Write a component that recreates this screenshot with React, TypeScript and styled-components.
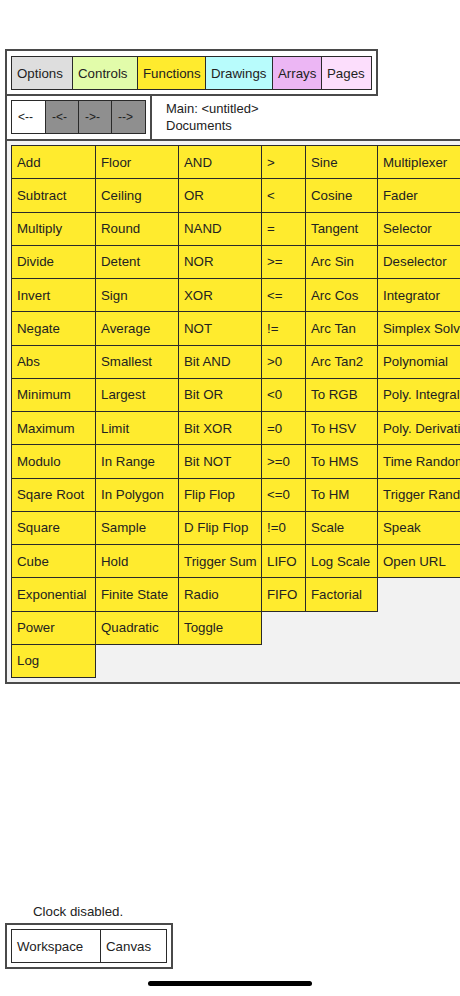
import React from "react";
import styled, { createGlobalStyle } from "styled-components";

const GlobalStyle = createGlobalStyle`
  html, body {
    margin: 0;
    padding: 0;
    background: #ffffff;
    overflow: hidden;
  }
  body {
    font-family: "Liberation Sans", Arial, Helvetica, sans-serif;
    font-size: 13.3px;
    color: #222;
  }
`;

interface Tab {
  label: string;
  color: string;
  width: number;
}

const tabs: Tab[] = [
  { label: "Options", color: "#dedede", width: 60 },
  { label: "Controls", color: "#e2fcaa", width: 65 },
  { label: "Functions", color: "#ffeb2e", width: 68 },
  { label: "Drawings", color: "#b8fcfc", width: 67 },
  { label: "Arrays", color: "#ecb6f4", width: 49 },
  { label: "Pages", color: "#fcdefc", width: 50 },
];

const navButtons = [
  { label: "<--", active: true, width: 33 },
  { label: "-<-", active: false, width: 33 },
  { label: "->-", active: false, width: 33 },
  { label: "-->", active: false, width: 34 },
];

const columns: { width: number; items: string[] }[] = [
  {
    width: 85,
    items: [
      "Add", "Subtract", "Multiply", "Divide", "Invert", "Negate", "Abs",
      "Minimum", "Maximum", "Modulo", "Sqare Root", "Square", "Cube",
      "Exponential", "Power", "Log",
    ],
  },
  {
    width: 83,
    items: [
      "Floor", "Ceiling", "Round", "Detent", "Sign", "Average", "Smallest",
      "Largest", "Limit", "In Range", "In Polygon", "Sample", "Hold",
      "Finite State", "Quadratic",
    ],
  },
  {
    width: 83,
    items: [
      "AND", "OR", "NAND", "NOR", "XOR", "NOT", "Bit AND", "Bit OR",
      "Bit XOR", "Bit NOT", "Flip Flop", "D Flip Flop", "Trigger Sum",
      "Radio", "Toggle",
    ],
  },
  {
    width: 44,
    items: [
      ">", "<", "=", ">=", "<=", "!=", ">0", "<0", "=0", ">=0", "<=0",
      "!=0", "LIFO", "FIFO",
    ],
  },
  {
    width: 72,
    items: [
      "Sine", "Cosine", "Tangent", "Arc Sin", "Arc Cos", "Arc Tan",
      "Arc Tan2", "To RGB", "To HSV", "To HMS", "To HM", "Scale",
      "Log Scale", "Factorial",
    ],
  },
  {
    width: 130,
    items: [
      "Multiplexer", "Fader", "Selector", "Deselector", "Integrator",
      "Simplex Solver", "Polynomial", "Poly. Integral", "Poly. Derivative",
      "Time Random", "Trigger Random", "Speak", "Open URL",
    ],
  },
];

const App: React.FC = () => {
  return (
    <>
      <GlobalStyle />
      <Screen>
        <Main>
          <TabFrame>
            <TabStrip>
              {tabs.map((t) => (
                <TabButton key={t.label} $bg={t.color} $w={t.width}>
                  {t.label}
                </TabButton>
              ))}
            </TabStrip>
          </TabFrame>
          <NavRow>
            <NavFrame>
              <NavStrip>
                {navButtons.map((b) => (
                  <NavButton key={b.label} $active={b.active} $w={b.width}>
                    {b.label}
                  </NavButton>
                ))}
              </NavStrip>
            </NavFrame>
            <Info>
              <div>Main: &lt;untitled&gt;</div>
              <div>Documents</div>
            </Info>
          </NavRow>
          <GridPanel>
            {columns.map((col, i) => (
              <Column key={i} $w={col.width}>
                {col.items.map((item) => (
                  <Cell key={item}>{item}</Cell>
                ))}
              </Column>
            ))}
          </GridPanel>
        </Main>

        <Footer>
          <Status>Clock disabled.</Status>
          <FooterFrame>
            <TabStrip>
              <FooterButton $w={88}>Workspace</FooterButton>
              <FooterButton $w={66}>Canvas</FooterButton>
            </TabStrip>
          </FooterFrame>
        </Footer>
        <HomeIndicator />
      </Screen>
    </>
  );
};

const Screen = styled.div`
  position: relative;
  display: flex;
  flex-direction: column;
  height: 996px;
  width: 460px;
  padding: 49px 0 27px 5px;
  box-sizing: border-box;
  overflow: hidden;
`;

const Main = styled.div`
  display: flex;
  flex-direction: column;
  align-items: flex-start;
`;

const TabFrame = styled.div`
  border: 2px solid #4a4a4a;
  padding: 5px 4px 4px 4px;
  background: #fff;
`;

const FooterFrame = styled(TabFrame)`
  padding: 4px;
`;

const TabStrip = styled.div`
  display: flex;
  border: 1px solid #2a2a2a;
`;

const TabButton = styled.div<{ $bg: string; $w: number }>`
  display: flex;
  align-items: center;
  box-sizing: border-box;
  width: ${(p) => p.$w}px;
  height: 32px;
  padding-left: 5px;
  background: ${(p) => p.$bg};
  white-space: nowrap;
  & + & {
    border-left: 1px solid #2a2a2a;
  }
`;

const NavRow = styled.div`
  display: flex;
  align-items: stretch;
  height: 43px;
  box-sizing: border-box;
  border-left: 2px solid #4a4a4a;
`;

const NavFrame = styled.div`
  display: flex;
  align-items: flex-start;
  padding: 4px 4px 0 4px;
  border-right: 2px solid #4a4a4a;
`;

const NavStrip = styled.div`
  display: flex;
  border: 1px solid #2a2a2a;
`;

const NavButton = styled.div<{ $active: boolean; $w: number }>`
  display: flex;
  align-items: center;
  box-sizing: border-box;
  width: ${(p) => p.$w}px;
  height: 32px;
  padding-left: 6px;
  background: ${(p) => (p.$active ? "#ffffff" : "#8f8f8f")};
  font-size: 12px;
  & + & {
    border-left: 1px solid #2a2a2a;
  }
`;

const Info = styled.div`
  display: flex;
  flex-direction: column;
  justify-content: center;
  padding-left: 14px;
  padding-bottom: 2px;
  line-height: 17px;
  font-size: 13px;
`;

const GridPanel = styled.div`
  display: flex;
  align-items: flex-start;
  width: 600px;
  border: 2px solid #4a4a4a;
  padding: 4px;
  background: #f2f2f2;
`;

const Column = styled.div<{ $w: number }>`
  display: flex;
  flex-direction: column;
  flex: none;
  width: ${(p) => p.$w}px;
  &:first-child > div {
    border-left: 1px solid #2a2a2a;
  }
`;

const Cell = styled.div`
  display: flex;
  align-items: center;
  box-sizing: border-box;
  height: 33.25px;
  padding-left: 5px;
  background: #ffeb2e;
  border-right: 1px solid #2a2a2a;
  border-bottom: 1px solid #2a2a2a;
  white-space: nowrap;
  overflow: hidden;
  &:first-child {
    border-top: 1px solid #2a2a2a;
    height: 34.25px;
  }
`;

const Footer = styled.div`
  margin-top: auto;
  display: flex;
  flex-direction: column;
  align-items: flex-start;
`;

const Status = styled.div`
  padding-left: 28px;
  margin-bottom: 3px;
  line-height: 17px;
`;

const FooterButton = styled.div<{ $w: number }>`
  display: flex;
  align-items: center;
  box-sizing: border-box;
  width: ${(p) => p.$w}px;
  height: 32px;
  padding-left: 5px;
  background: #fff;
  & + & {
    border-left: 1px solid #2a2a2a;
  }
`;

const HomeIndicator = styled.div`
  position: absolute;
  left: 148px;
  bottom: 10px;
  width: 164px;
  height: 5px;
  border-radius: 3px;
  background: #000;
`;

export default App;
